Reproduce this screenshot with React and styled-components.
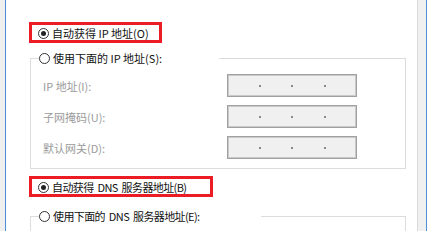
import React from "react";
import styled, { createGlobalStyle } from "styled-components";

const Global = createGlobalStyle`
  html, body { margin: 0; padding: 0; background: #ffffff; }
  body { font-family: "Noto Sans CJK SC", "Noto Sans", sans-serif; }
`;

const Frame = styled.div`
  display: flex;
  width: 429px;
  height: 231px;
  overflow: hidden;
  background: #ffffff;
`;

const LeftEdge = styled.div`
  flex: 0 0 5px;
  background: #efefef;
  border-right: 1px solid #4a8fd8;
`;

const RightEdge = styled.div`
  flex: 0 0 12px;
  display: flex;
`;

const RightPane = styled.div`
  flex: 0 0 8px;
  background: #f0f0f0;
  border-left: 1px solid #dadada;
`;

const RightBlue = styled.div`
  flex: 0 0 1px;
  background: #4a8fd8;
`;

const RightGap = styled.div`
  flex: 1;
  background: #ffffff;
`;

const Content = styled.div`
  flex: 1;
  display: flex;
  flex-direction: column;
  align-items: flex-start;
  padding: 22px 0 0 23px;
  font-size: 11px;
  color: #111111;
`;

const Highlight = styled.div`
  box-sizing: border-box;
  width: ${(p) => p.$w}px;
  height: 23px;
  border: 3px solid #ec1c24;
  display: flex;
  align-items: center;
  padding: 1px 0 0 6px;
  margin-top: ${(p) => p.$mt || 0}px;
`;

const RadioRow = styled.div`
  display: flex;
  align-items: center;
  gap: 3px;
  height: 14px;
  white-space: nowrap;
  line-height: 14px;
  letter-spacing: ${(p) => p.$ls || 0}px;
  word-spacing: ${(p) => (p.$ls ? 2 : 0)}px;
`;

const RadioCircle = styled.span`
  box-sizing: border-box;
  width: 11px;
  height: 11px;
  border-radius: 50%;
  border: 1px solid #333333;
  background: #ffffff;
  display: flex;
  align-items: center;
  justify-content: center;
  flex: 0 0 11px;
  &::after {
    content: "";
    width: 5px;
    height: 5px;
    border-radius: 50%;
    background: ${(p) => (p.$checked ? "#222222" : "transparent")};
  }
`;

const Group = styled.fieldset`
  box-sizing: border-box;
  margin: ${(p) => p.$mt}px 0 0 1px;
  width: 376px;
  min-width: 0;
  padding: 9px 12px 9px 8px;
  border: 1px solid #dcdcdc;
  ${(p) => (p.$h ? `height: ${p.$h}px; flex-shrink: 0;` : "")}
`;

const Legend = styled.legend`
  box-sizing: border-box;
  padding: 0;
  margin: 0;
  width: ${(p) => p.$w}px;
  height: 14px;
  background: #ffffff;
`;

const Fields = styled.div`
  display: grid;
  grid-template-columns: 184px 130px;
  row-gap: 8px;
  margin-left: 4px;
`;

const FieldLabel = styled.div`
  display: flex;
  align-items: center;
  color: #9a9a9a;
  height: 23px;
  white-space: nowrap;
`;

const IpBox = styled.div`
  box-sizing: border-box;
  height: 23px;
  border: 1px solid #a0a0a0;
  box-shadow: inset 0 0 0 1px #c9c9c9;
  background: #f0f0f0;
  display: flex;
  align-items: center;
`;

const Segment = styled.span`
  flex: 1;
  height: 100%;
`;

const Dot = styled.span`
  width: 2px;
  height: 2px;
  background: #8a8a8a;
  flex: 0 0 2px;
`;

function Radio({ checked, ls, children }) {
  return (
    <RadioRow $ls={ls}>
      <RadioCircle $checked={checked} />
      <span>{children}</span>
    </RadioRow>
  );
}

function IpField() {
  return (
    <IpBox>
      <Segment />
      <Dot />
      <Segment />
      <Dot />
      <Segment />
      <Dot />
      <Segment />
    </IpBox>
  );
}

const fields = ["IP 地址(I):", "子网掩码(U):", "默认网关(D):"];

export default function App() {
  return (
    <>
      <Global />
      <Frame>
        <LeftEdge />
        <Content>
          <Highlight $w={133}>
            <Radio checked>自动获得 IP 地址(O)</Radio>
          </Highlight>
          <Group $mt={8}>
            <Legend $w={180}>
              <Radio>使用下面的 IP 地址(S):</Radio>
            </Legend>
            <Fields>
              {fields.map((f) => (
                <React.Fragment key={f}>
                  <FieldLabel>{f}</FieldLabel>
                  <IpField />
                </React.Fragment>
              ))}
            </Fields>
          </Group>
          <Highlight $w={184} $mt={7}>
            <Radio checked ls={-0.6}>自动获得 DNS 服务器地址(B)</Radio>
          </Highlight>
          <Group $mt={12} $h={60}>
            <Legend $w={222}>
              <Radio ls={-0.6}>使用下面的 DNS 服务器地址(E):</Radio>
            </Legend>
          </Group>
        </Content>
        <RightEdge>
          <RightPane />
          <RightBlue />
          <RightGap />
        </RightEdge>
      </Frame>
    </>
  );
}
